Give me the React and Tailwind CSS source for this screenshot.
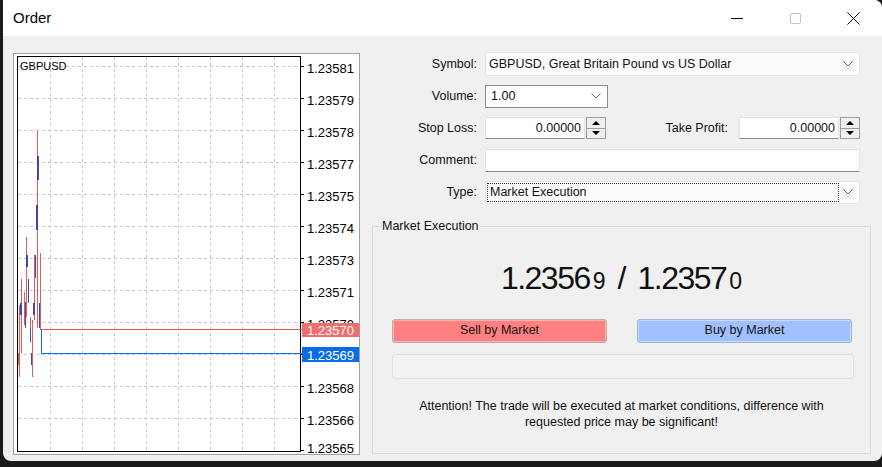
import React from "react";

const AXIS = [
  { y: 66, v: "1.23581" },
  { y: 98, v: "1.23579" },
  { y: 130, v: "1.23578" },
  { y: 162, v: "1.23577" },
  { y: 194, v: "1.23575" },
  { y: 226, v: "1.23574" },
  { y: 258, v: "1.23573" },
  { y: 290, v: "1.23571" },
  { y: 322, v: "1.23570" },
  { y: 386, v: "1.23568" },
  { y: 418, v: "1.23566" },
  { y: 446, v: "1.23565" },
];

const GRID_X = [50.5, 82.5, 114.5, 146.5, 178.5, 210.5, 242.5, 274.5];
const GRID_Y = [66.5, 98.5, 130.5, 162.5, 194.5, 226.5, 258.5, 290.5, 322.5, 354.5, 386.5, 418.5];

// red wicks: [x, y1, y2]
const WICKS = [
  [19, 305, 377],
  [21, 279, 353],
  [24, 292, 325],
  [26, 237, 317],
  [30, 317, 333],
  [32, 320, 377],
  [34, 255, 320],
  [37, 131, 328],
  [40, 253, 330],
];

// blue bodies: [x, y1, y2, w]
const BODIES = [
  [20, 303, 315, 2],
  [25, 302, 328, 1],
  [26, 255, 267, 2],
  [28, 279, 303, 1],
  [30, 328, 342, 1],
  [31, 353, 365, 1],
  [33, 303, 315, 2],
  [35, 255, 278, 1],
  [36, 205, 230, 2],
  [37, 156, 180, 2],
  [39, 303, 328, 1],
];

const SVG_FONT = "Liberation Sans, Arial, sans-serif";

function Chart() {
  return (
    <div className="w-[347px] h-[402px] border border-[#a0a0a0] bg-white">
      <svg width="345" height="400" viewBox="14 54 345 400" className="block">
        {GRID_X.map((x) => (
          <line key={x} x1={x} y1={57} x2={x} y2={451} stroke="#c8c8c8" strokeDasharray="3 3" />
        ))}
        {GRID_Y.map((y) => (
          <line key={y} x1={18} y1={y} x2={300} y2={y} stroke="#c8c8c8" strokeDasharray="3 3" />
        ))}
        <rect x="17.5" y="56.5" width="283" height="395" fill="none" stroke="#000" />
        {GRID_Y.concat([450.5]).map((y) => (
          <line key={"t" + y} x1={301} y1={y} x2={304} y2={y} stroke="#000" />
        ))}
        {AXIS.map((a) => (
          <text key={a.v} x="307" y={a.y + 7} fontSize="13" fill="#000" fontFamily={SVG_FONT}>
            {a.v}
          </text>
        ))}
        <text x="20" y="70" fontSize="11" fill="#000" fontFamily={SVG_FONT}>
          GBPUSD
        </text>

        {/* candles */}
        <rect x="18" y="353" width="2" height="12" fill="#e05a5a" />
        {WICKS.map(([x, a, b], i) => (
          <rect key={"w" + i} x={x} y={a} width="1" height={b - a} fill="#e05a5a" />
        ))}
        {BODIES.map(([x, a, b, w], i) => (
          <rect key={"b" + i} x={x} y={a} width={w} height={b - a} fill="#4646a6" />
        ))}

        {/* bid / ask lines */}
        <rect x="41" y="329" width="261" height="1" fill="#e85555" />
        <rect x="41" y="329" width="1" height="25" fill="#0f6ce0" />
        <rect x="41" y="353" width="261" height="1" fill="#0f6ce0" />

        <rect x="302" y="323" width="57" height="14" fill="#f06d6d" />
        <text x="307" y="335" fontSize="13" fill="#fff" fontFamily={SVG_FONT}>
          1.23570
        </text>
        <rect x="302" y="347" width="57" height="15" fill="#0b6de6" />
        <text x="307" y="359.5" fontSize="13" fill="#fff" fontFamily={SVG_FONT}>
          1.23569
        </text>
      </svg>
    </div>
  );
}

function Chevron() {
  return (
    <svg width="10" height="6" viewBox="0 0 10 6" className="shrink-0">
      <path d="M0.5 0.5 L5 5 L9.5 0.5" fill="none" stroke="#606060" strokeWidth="1" />
    </svg>
  );
}

function Spinner() {
  return (
    <div className="ml-[1px] w-[20px] h-[22px] flex flex-col border border-[#9c9c9c] bg-[#efefef]">
      <div className="flex-1 flex items-center justify-center border-b border-[#9c9c9c]">
        <svg width="8" height="4" viewBox="0 0 8 4">
          <path d="M0 4 L4 0 L8 4 Z" fill="#000" />
        </svg>
      </div>
      <div className="flex-1 flex items-center justify-center">
        <svg width="8" height="4" viewBox="0 0 8 4">
          <path d="M0 0 L4 4 L8 0 Z" fill="#000" />
        </svg>
      </div>
    </div>
  );
}

function Label({ children }) {
  return <span className="w-[117px] text-right shrink-0">{children}</span>;
}

export default function App() {
  return (
    <div className="w-[882px] h-[467px] bg-[#1b1b1b] pl-[3px] overflow-hidden font-['Liberation_Sans',Arial,sans-serif] text-[12.5px] text-[#111]">
      <div className="w-[879px] h-[461px] bg-[#f0f0f0] rounded-b-[8px] rounded-tr-[8px] flex flex-col overflow-hidden">
        {/* title bar */}
        <div className="h-[36px] bg-white flex items-center shrink-0">
          <span className="pl-[10px] text-[15px] text-black">Order</span>
          <div className="ml-auto flex h-full">
            <div className="w-[58px] flex items-center justify-center">
              <div className="w-[12px] h-px bg-black" />
            </div>
            <div className="w-[58px] flex items-center justify-center">
              <div className="w-[11px] h-[11px] border border-[#c4c4c4] rounded-[2px]" />
            </div>
            <div className="w-[58px] flex items-center justify-center">
              <svg width="13" height="13" viewBox="0 0 13 13">
                <path d="M0.5 0.5 L12.5 12.5 M12.5 0.5 L0.5 12.5" stroke="#000" strokeWidth="1" />
              </svg>
            </div>
          </div>
        </div>

        {/* content */}
        <div className="flex-1 flex">
          <div className="pl-[10px] pt-[17px]">
            <Chart />
          </div>

          <div className="flex-1 flex flex-col pt-[12px]">
            <div className="h-[32px] flex items-center gap-[8px]">
              <Label>Symbol:</Label>
              <div className="w-[375px] h-[24px] flex items-center pl-[3px] pr-[6px] border border-[#e6e6e6] bg-[#fbfbfb] rounded-[3px]">
                <span className="flex-1">GBPUSD, Great Britain Pound vs US Dollar</span>
                <Chevron />
              </div>
            </div>
            <div className="h-[32px] flex items-center gap-[8px]">
              <Label>Volume:</Label>
              <div className="w-[123px] h-[23px] flex items-center pl-[5px] pr-[6px] border border-[#8c8c8c] bg-white">
                <span className="flex-1">1.00</span>
                <Chevron />
              </div>
            </div>
            <div className="h-[32px] flex items-center gap-[8px]">
              <Label>Stop Loss:</Label>
              <div className="flex items-center">
                <div className="w-[100px] h-[22px] flex items-center justify-end pr-[3px] bg-white border border-[#e3e3e3] border-b-[#8a8a8a]">
                  0.00000
                </div>
                <Spinner />
                <span className="w-[122px] text-right">Take Profit:</span>
                <div className="ml-[11px] w-[100px] h-[22px] flex items-center justify-end pr-[3px] bg-white border border-[#e3e3e3] border-b-[#8a8a8a]">
                  0.00000
                </div>
                <Spinner />
              </div>
            </div>
            <div className="h-[32px] flex items-center gap-[8px]">
              <Label>Comment:</Label>
              <div className="w-[375px] h-[23px] bg-white border border-[#e3e3e3] border-b-[#8a8a8a]" />
            </div>
            <div className="h-[32px] flex items-center gap-[8px]">
              <Label>Type:</Label>
              <div className="w-[375px] h-[23px] flex items-center pl-[1px] pr-[6px] border border-[#e6e6e6] bg-[#fbfbfb] rounded-[3px]">
                <div className="w-[352px] h-[19px] flex items-center pl-[2px] border border-dotted border-[#333]">
                  Market Execution
                </div>
                <span className="ml-auto">
                  <Chevron />
                </span>
              </div>
            </div>

            <fieldset className="mt-[9px] ml-[12px] w-[499px] h-[237px] border border-[#dadada] flex flex-col">
              <legend className="ml-[8px] px-[1px]">Market Execution</legend>
              <div className="mt-[18px] h-[36px] flex items-baseline justify-center text-[32px] text-[#111]">
                <span className="tracking-[-1.5px]">1.2356</span>
                <span className="ml-[3px] text-[23px]">9</span>
                <span className="ml-[12px] mr-[11px]">/</span>
                <span className="tracking-[-1.5px]">1.2357</span>
                <span className="ml-[3px] text-[23px]">0</span>
              </div>
              <div className="mt-[29px] pl-[19px] flex gap-[30px]">
                <div className="w-[215px] h-[24px] flex items-center justify-center bg-[#ff8080] border border-[#c4a9a9] rounded-[3px] shadow-[inset_0_0_0_1px_#ffb0b0]">
                  Sell by Market
                </div>
                <div className="w-[215px] h-[24px] flex items-center justify-center bg-[#a0c0ff] border border-[#a3b3cf] rounded-[3px] shadow-[inset_0_0_0_1px_#c8dbff]">
                  Buy by Market
                </div>
              </div>
              <div className="mt-[11px] ml-[19px] w-[462px] h-[25px] bg-[#f2f2f2] border border-[#e2e2e2] rounded-[3px]" />
              <p className="mt-[19px] text-center leading-[16px]">
                Attention! The trade will be executed at market conditions, difference with
                <br />
                requested price may be significant!
              </p>
            </fieldset>
          </div>
        </div>
      </div>
    </div>
  );
}
